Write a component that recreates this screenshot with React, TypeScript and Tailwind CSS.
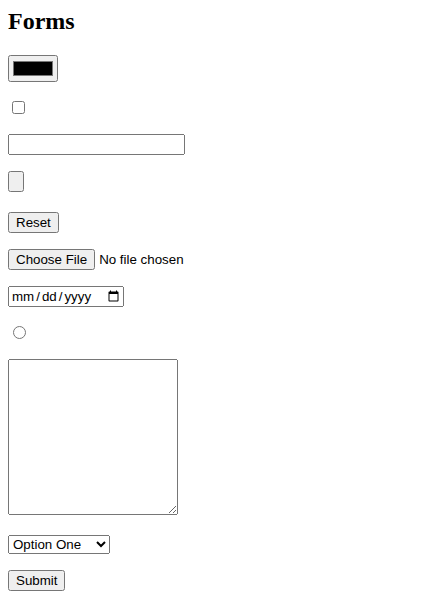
export default function App() {
  const ctl = "[all:revert] font-['Liberation_Sans','Arial',sans-serif]!";
  return (
    <div className="px-2 pb-2 font-['Liberation_Serif','Times_New_Roman',serif] text-[16px] leading-[normal] text-black bg-white">
      <h2 className="mt-2 mb-[0.83em] text-[1.5em] font-bold">Forms</h2>
      <p className="my-4">
        <input type="color" className={ctl} />
      </p>
      <p className="my-4">
        <input type="checkbox" className={ctl} />
      </p>
      <p className="my-4">
        <input type="text" className={`${ctl} box-border! w-[177px]!`} />
      </p>
      <p className="mt-4 mb-[19px]">
        <button type="button" className={`${ctl} box-border! h-[21px]! w-[16px]!`}></button>
      </p>
      <p className="my-4">
        <input type="reset" value="Reset" className={ctl} />
      </p>
      <p className="my-4">
        <input
          type="file"
          className={`${ctl} file:[all:revert] file:font-['Liberation_Sans','Arial',sans-serif]!`}
        />
      </p>
      <p className="my-4">
        <input
          type="date"
          className={`${ctl} box-border! w-[116px]! [&::-webkit-datetime-edit-text]:px-[1px]!`}
        />
      </p>
      <p className="my-4">
        <input type="radio" className={ctl} />
      </p>
      <p className="my-4">
        <textarea className={`${ctl} box-border! w-[170px]! h-[156px]!`} rows={10} cols={20}></textarea>
      </p>
      <p className="my-4">
        <select className={`${ctl} w-[102px]!`} defaultValue="1">
          <option value="1">Option One</option>
          <option value="2">Option Two</option>
          <option value="3">Option Three</option>
        </select>
      </p>
      <p className="my-4">
        <input type="submit" value="Submit" className={ctl} />
      </p>
    </div>
  );
}
